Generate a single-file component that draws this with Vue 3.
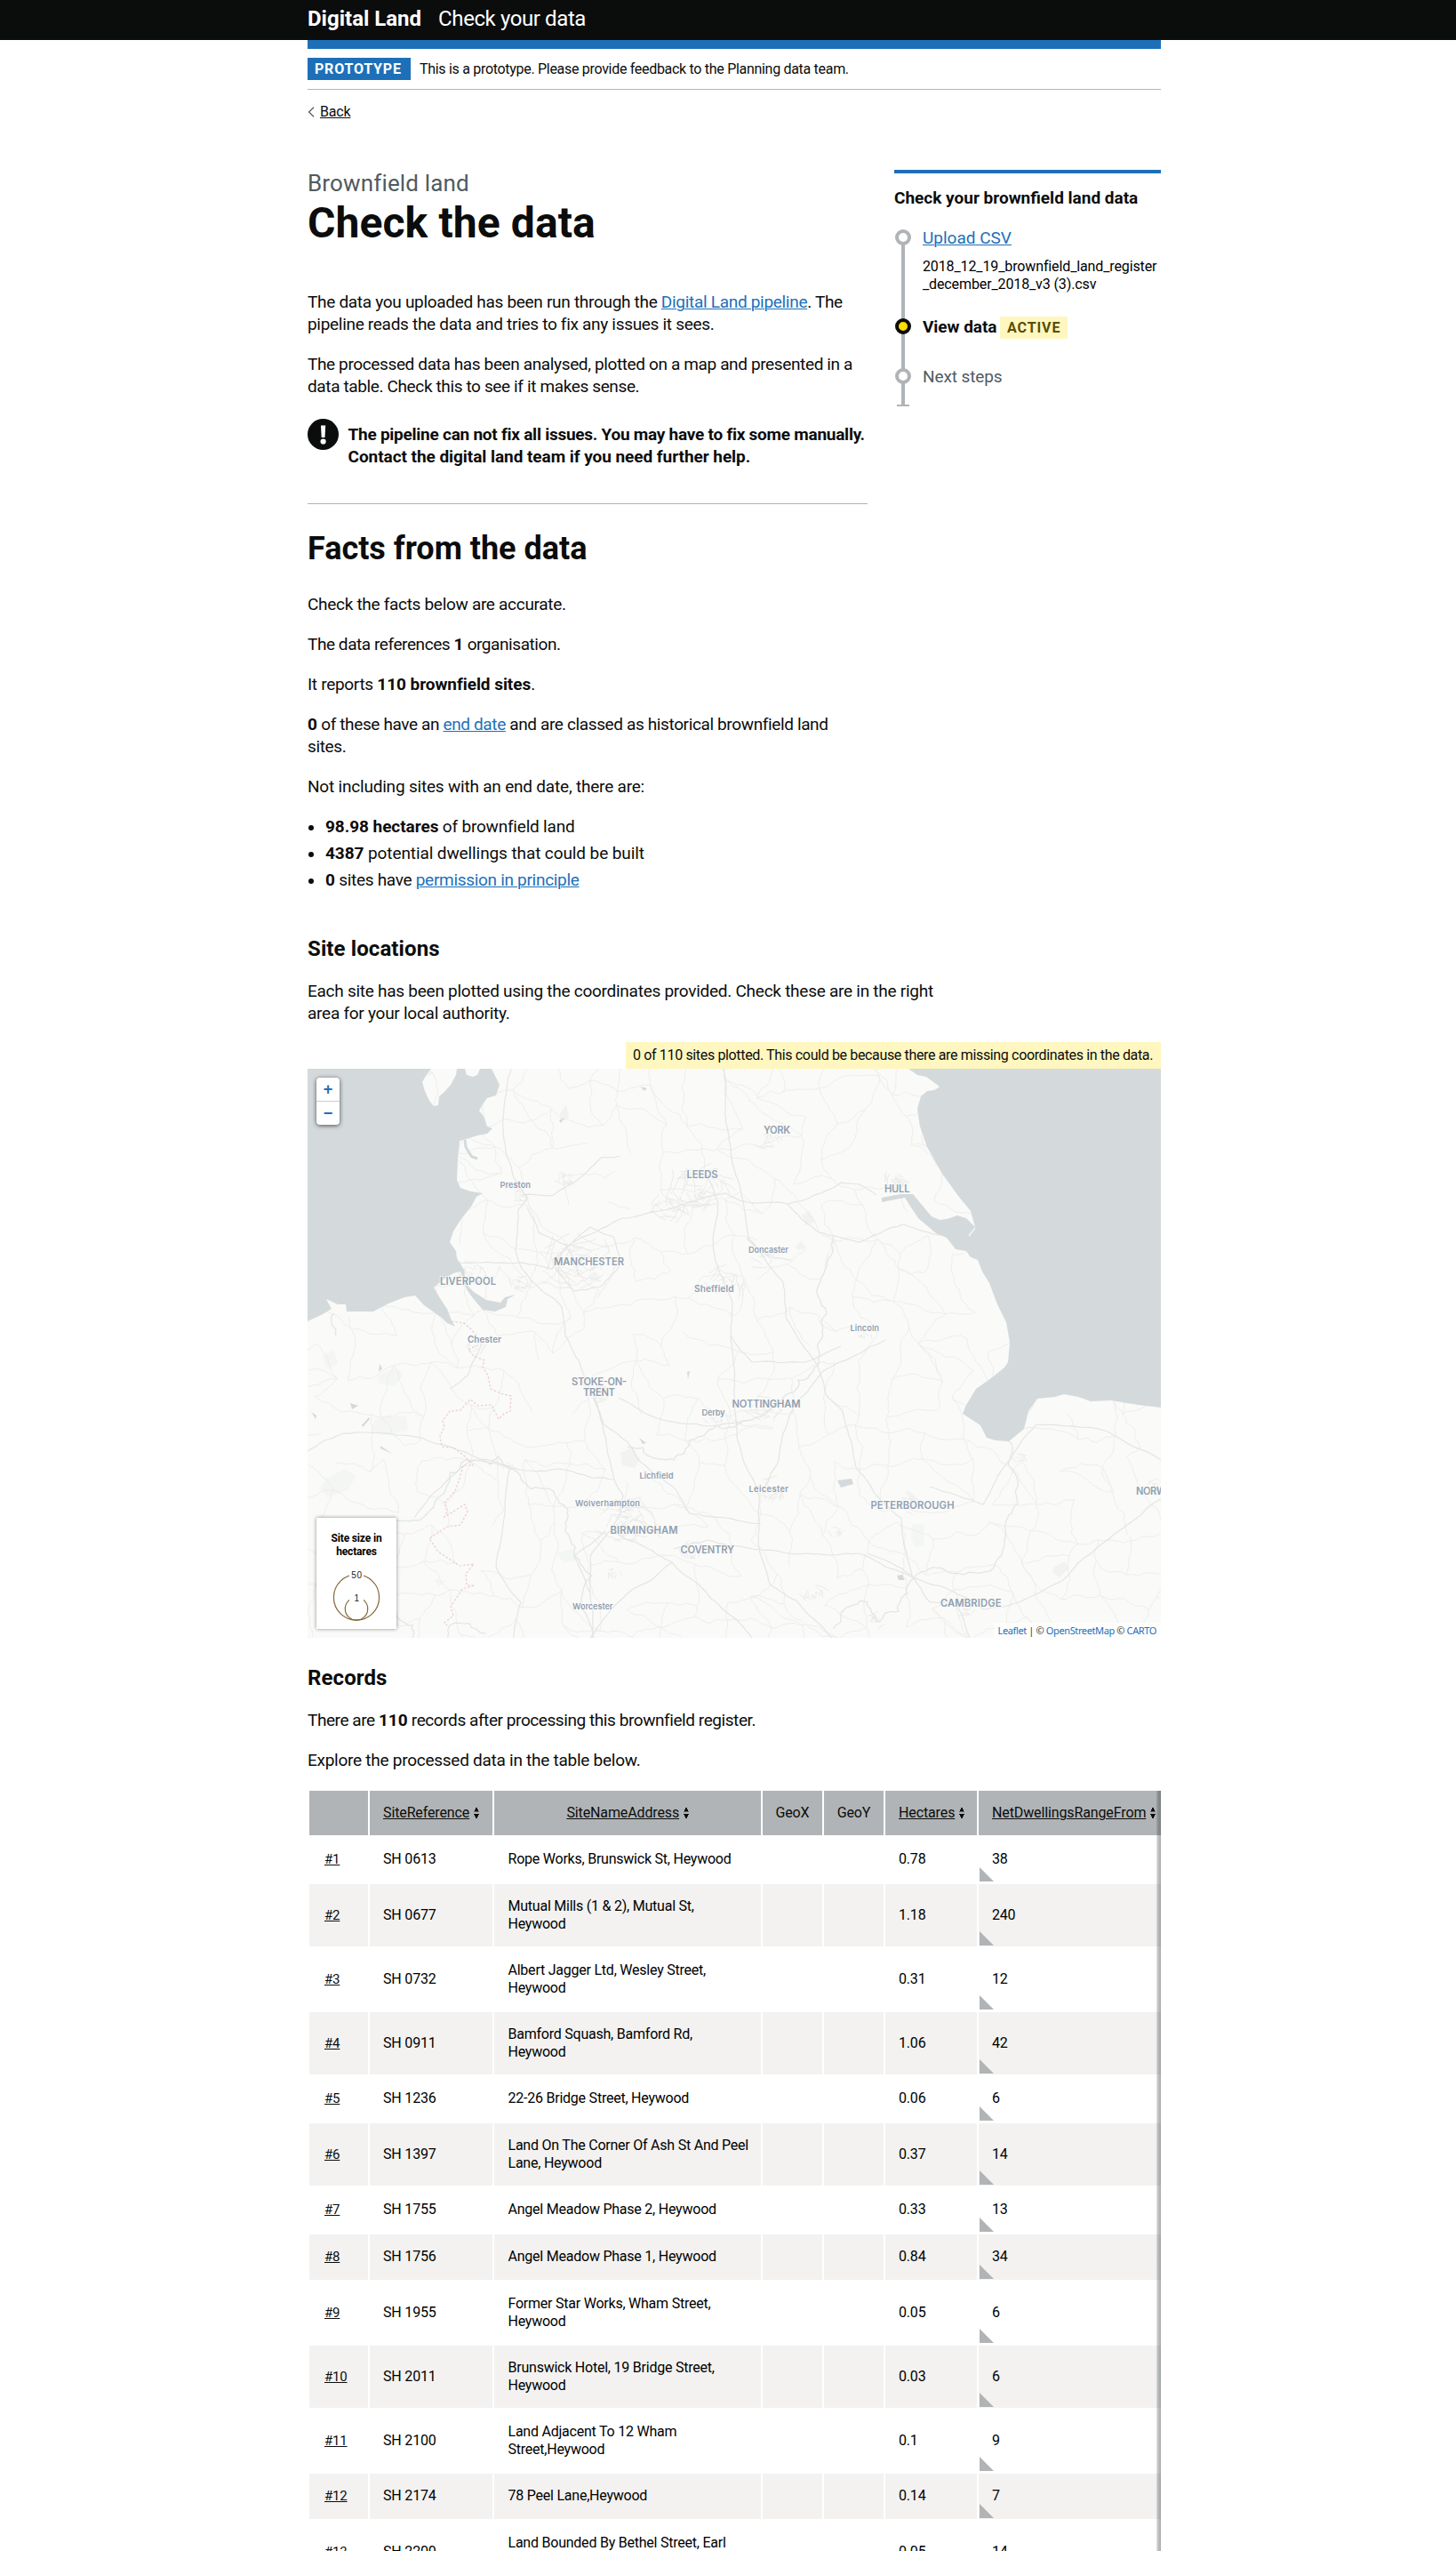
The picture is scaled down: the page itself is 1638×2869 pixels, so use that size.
<script setup>
const rows = [
  ['SH 0613', ['Rope Works, Brunswick St, Heywood'], '0.78', '38'],
  ['SH 0677', ['Mutual Mills (1 & 2), Mutual St,', 'Heywood'], '1.18', '240'],
  ['SH 0732', ['Albert Jagger Ltd, Wesley Street,', 'Heywood'], '0.31', '12'],
  ['SH 0911', ['Bamford Squash, Bamford Rd,', 'Heywood'], '1.06', '42'],
  ['SH 1236', ['22-26 Bridge Street, Heywood'], '0.06', '6'],
  ['SH 1397', ['Land On The Corner Of Ash St And Peel', 'Lane, Heywood'], '0.37', '14'],
  ['SH 1755', ['Angel Meadow Phase 2, Heywood'], '0.33', '13'],
  ['SH 1756', ['Angel Meadow Phase 1, Heywood'], '0.84', '34'],
  ['SH 1955', ['Former Star Works, Wham Street,', 'Heywood'], '0.05', '6'],
  ['SH 2011', ['Brunswick Hotel, 19 Bridge Street,', 'Heywood'], '0.03', '6'],
  ['SH 2100', ['Land Adjacent To 12 Wham', 'Street,Heywood'], '0.1', '9'],
  ['SH 2174', ['78 Peel Lane,Heywood'], '0.14', '7'],
  ['SH 2200', ['Land Bounded By Bethel Street, Earl', 'Street, Heywood'], '0.05', '14'],
]

// left edge, baseline, rendered width, size
const places = [
  ['YORK', 513, 73, 30, 11.2], ['LEEDS', 426.5, 123, 35, 11.2], ['HULL', 649, 139, 28.5, 11.2],
  ['MANCHESTER', 277, 221, 79, 11.2], ['LIVERPOOL', 149, 243, 63, 11.2],
  ['STOKE-ON-', 297, 356, 62, 11.2], ['TRENT', 310, 367.5, 36, 11.2],
  ['NOTTINGHAM', 477.5, 381, 77, 11.2], ['BIRMINGHAM', 340.5, 523, 76, 11.2],
  ['COVENTRY', 419.5, 544.5, 60.5, 11.2], ['PETERBOROUGH', 633.5, 495, 94, 11.2],
  ['CAMBRIDGE', 712, 604.5, 68.5, 11.2], ['NORWICH', 932, 478.5, 52, 11.2],
  ['Preston', 216.5, 134, 34.5, 9.3], ['Sheffield', 435, 250.5, 44.5, 10.2],
  ['Doncaster', 496, 206.5, 45, 9.3], ['Lincoln', 610.5, 295, 32.5, 9.3],
  ['Chester', 180, 307.5, 38, 10], ['Derby', 443.5, 389.5, 26, 9.3],
  ['Lichfield', 373.5, 461, 38, 9.3], ['Wolverhampton', 301, 491.5, 73, 9.3],
  ['Worcester', 298, 608, 45.5, 9.3], ['Leicester', 496.5, 475.5, 44.5, 9.3],
]

let seed = 20181219
const rnd = () => {
  seed = (seed * 1664525 + 1013904223) % 4294967296
  return seed / 4294967296
}

// Subdivide a list of waypoints into an organic, slightly meandering line
function meander(flat, amount = 0.09) {
  let pts = []
  for (let i = 0; i < flat.length; i += 2) pts.push([flat[i], flat[i + 1]])
  for (let pass = 0; pass < 3; pass++) {
    const next = [pts[0]]
    for (let i = 1; i < pts.length; i++) {
      const [ax, ay] = pts[i - 1]
      const [bx, by] = pts[i]
      const k = (rnd() - 0.5) * 2 * amount
      next.push([(ax + bx) / 2 - (by - ay) * k, (ay + by) / 2 + (bx - ax) * k], [bx, by])
    }
    pts = next
  }
  return 'M' + pts.map(p => p[0].toFixed(1) + ' ' + p[1].toFixed(1)).join('L')
}

const motorways = [
  [229, 0, 222, 35, 220, 68, 225, 100, 232, 122, 248, 145, 237, 158, 236, 180, 234, 205, 242, 226, 262, 248, 286, 268, 290, 300, 306, 330, 322, 368, 330, 395, 336, 420, 342, 450, 346, 465, 355, 480, 352, 500, 340, 520, 318, 548, 318, 590, 320, 640],
  [468, 0, 470, 40, 474, 80, 482, 120, 490, 150, 496, 190, 515, 215, 535, 240, 538, 280, 574, 334, 584, 368, 602, 385, 612, 420, 618, 450, 640, 480, 668, 505, 674, 545, 680, 570, 700, 600],
  [240, 142, 275, 143, 310, 120, 330, 100, 352, 98],
  [150, 215, 190, 218, 240, 218, 275, 225, 292, 200, 330, 180, 355, 168, 395, 160, 430, 150, 470, 140, 494, 150, 540, 152, 565, 145, 600, 128, 620, 130, 640, 142],
  [247, 156, 260, 184, 290, 198, 300, 214, 305, 232], [450, 120, 462, 150, 456, 190, 462, 225, 478, 262, 476, 300, 480, 350, 482, 395, 490, 440, 508, 480, 508, 540, 520, 580, 550, 598, 590, 640],
  [345, 462, 320, 460, 285, 450, 250, 452, 228, 448], [321, 370, 333, 400, 360, 420, 372, 440, 400, 462, 416, 476, 430, 500, 470, 505, 510, 512],
  [412, 540, 450, 530, 500, 540, 560, 545, 620, 545, 650, 560, 680, 572, 720, 585, 760, 608, 800, 600, 850, 575, 900, 530, 960, 484],
  [476, 300, 500, 330, 560, 330, 600, 312], [340, 520, 380, 538, 410, 555, 440, 580, 470, 610, 500, 640],
  [318, 590, 300, 548, 335, 520], [650, 305, 580, 340, 550, 375, 535, 410, 530, 440, 515, 470],
  [680, 570, 630, 545], [350, 370, 400, 395, 450, 402, 500, 395], [700, 600, 730, 600, 745, 640],
  [540, 152, 575, 184, 620, 195, 670, 175, 715, 187], [494, 190, 520, 212, 545, 215], [280, 225, 300, 250, 330, 245, 352, 220, 345, 190, 318, 178, 292, 200, 275, 215],
  [0, 430, 40, 410, 100, 412, 160, 425, 228, 448], [120, 505, 160, 460, 185, 440, 228, 448], [700, 470, 760, 490, 790, 440, 820, 400, 900, 408, 960, 440],
  [228, 448, 222, 500, 212, 560, 240, 600, 232, 640], [160, 360, 180, 345, 195, 310], [318, 640, 360, 590, 410, 555],
]

// Country roads: a loose lattice of settlements joined to their neighbours
const gx = 38
const gy = 36
const cols = Math.ceil(960 / gx) + 2
const lines = Math.ceil(640 / gy) + 2
const nodes = []
for (let j = 0; j < lines; j++)
  for (let i = 0; i < cols; i++)
    nodes.push([(i - 0.5) * gx + (rnd() - 0.5) * 32, (j - 0.5) * gy + (rnd() - 0.5) * 30])
const lanes = []
for (let j = 0; j < lines - 1; j++)
  for (let i = 0; i < cols - 1; i++) {
    const a = nodes[j * cols + i]
    if (rnd() < 0.6) lanes.push([...a, ...nodes[j * cols + i + 1]])
    if (rnd() < 0.6) lanes.push([...a, ...nodes[(j + 1) * cols + i]])
    if (rnd() < 0.25) lanes.push([...a, ...nodes[(j + 1) * cols + i + 1]])
  }

const towns = [
  [305, 215, 42], [440, 140, 40], [360, 510, 36], [515, 382, 20], [520, 475, 18], [186, 228, 18], [470, 240, 22],
  [330, 365, 16], [520, 80, 14], [660, 125, 14], [515, 210, 16], [435, 545, 16], [675, 492, 14], [744, 605, 14],
  [228, 448, 9], [240, 142, 12], [190, 312, 12], [460, 395, 14], [800, 438, 8], [345, 570, 10], [625, 300, 10],
  [570, 590, 14], [595, 520, 10], [954, 470, 12], [240, 240, 14], [640, 620, 12], [290, 122, 12], [405, 155, 22],
]
const streets = []
for (const [x, y, r] of towns) {
  const n = Math.round(r * 1.1)
  for (let k = 0; k < n; k++) {
    const a = rnd() * 6.283
    const d = rnd() * r
    const b = a + 0.5 + rnd() * 0.8
    const e = Math.max(3, d + (rnd() - 0.5) * r * 0.8)
    streets.push([x + Math.cos(a) * d, y + Math.sin(a) * d * 0.8, x + Math.cos(b) * e, y + Math.sin(b) * e * 0.8])
  }
}
const motorwayPath = motorways.map(m => meander(m, 0.05)).join('')
const lanePath = lanes.map(m => meander(m, 0.14)).join('')
const streetPath = streets.map(m => meander(m, 0.1)).join('')
const rivers = [
  [100, 508, 120, 508, 150, 480, 160, 455, 178, 440, 205, 445, 215, 436, 228, 450, 240, 462, 250, 472, 275, 474, 288, 490, 290, 510, 300, 548, 320, 570, 322, 640],
  [474, 403, 500, 395, 535, 370, 552, 350, 574, 334, 580, 300, 584, 275, 578, 235, 590, 200, 592, 190],
  [592, 630, 600, 612, 630, 600, 640, 622, 665, 610, 675, 590, 688, 567, 720, 566, 768, 565, 785, 525, 792, 500, 792, 450, 789, 419],
  [360, 425, 390, 438, 412, 440, 430, 418, 450, 408, 474, 403], [30, 275, 32, 300], [158, 640, 160, 626, 200, 635], [100, 612, 118, 625, 118, 640],
].map(r => meander(r, 0.2)).join('')
</script>

<template>
  <div class="page">
    <header class="top">
      <div class="wrap top-inner"><strong>Digital Land</strong><span>Check your data</span></div>
    </header>

    <div class="wrap">
      <div class="bar"></div>
      <div class="phase">
        <strong class="tag">PROTOTYPE</strong>
        <span>This is a prototype. Please provide feedback to the Planning data team.</span>
      </div>
      <div class="back">
        <svg width="8" height="12" viewBox="0 0 8 12"><path d="M7 .7 1.6 6 7 11.300" fill="none" stroke="#505a5f" stroke-width="1.200" /></svg>
        <a href="#">Back</a>
      </div>

      <div class="columns">
        <main class="intro">
          <span class="caption">Brownfield land</span>
          <h1>Check the data</h1>
          <p>The data you uploaded has been run through the <a href="#">Digital Land pipeline</a>. The<br>pipeline reads the data and tries to fix any issues it sees.</p>
          <p class="tight">The processed data has been analysed, plotted on a map and presented in a<br>data table. Check this to see if it makes sense.</p>
          <div class="warning">
            <svg width="35" height="35" viewBox="0 0 35 35">
              <circle cx="17.500" cy="17.500" r="17.500" fill="#0b0c0c" />
              <path d="M15 7.500h5.200l-.7 13.500h-3.800z" fill="#fff" />
              <circle cx="17.600" cy="25.500" r="3.100" fill="#fff" />
            </svg>
            <strong>The pipeline can not fix all issues. You may have to fix some manually.<br><span class="contact">Contact the digital land team if you need further help.</span></strong>
          </div>
          <hr>
          <h2>Facts from the data</h2>
          <p>Check the facts below are accurate.</p>
          <p class="tighter">The data references <b>1</b> organisation.</p>
          <p>It reports <b>110 brownfield sites</b>.</p>
          <p class="tight"><b>0</b> of these have an <a href="#">end date</a> and are classed as historical brownfield land<br>sites.</p>
          <p class="loose">Not including sites with an end date, there are:</p>
          <ul>
            <li class="loose"><b>98.98 hectares</b> of brownfield land</li>
            <li class="looser"><b>4387</b> potential dwellings that could be built</li>
            <li><b>0</b> sites have <a href="#">permission in principle</a></li>
          </ul>
        </main>

        <aside class="side">
          <h4>Check your brownfield land data</h4>
          <ol>
            <li class="step upload">
              <a href="#">Upload CSV</a>
              <small>2018_12_19_brownfield_land_register<br>_december_2018_v3 (3).csv</small>
            </li>
            <li class="step active"><strong>View data</strong><span class="tag yellow">ACTIVE</span></li>
            <li class="step next">Next steps</li>
          </ol>
        </aside>
      </div>

      <h3>Site locations</h3>
      <p class="easy">Each site has been plotted using the coordinates provided. Check these are in the right<br>area for your local authority.</p>

      <div class="notice"><span>0 of 110 sites plotted. This could be because there are missing coordinates in the data.</span></div>
      <div class="map">
        <svg class="tiles" width="960" height="640" viewBox="0 0 960 640">
          <rect width="960" height="640" fill="#fafaf8" />
          <g fill="#f4f6f4">
            <path d="M76 395l15-6 20 2 2 16-24 5-18-6zM22 460l20-10 12 8-8 16-24 8-8-10zM16 322l14-6 4 16-12 6zM78 345l20-8 10 6-10 14-18-4zM280 545l20-6 4 14-16 2zM680 512l14 1-1 24-10 1-4-12zM142 574l14 2-8 6z" />
          </g>
          <g fill="#f2f2f0">
            <path d="M352 432l12-6 10 12-6 11-14-3zM284 50l7-10 3 14-9 6zM556 164l8-4 8 12-12 4zM549 200l6-6 7 8-10 2zM672 474l6 2 12 11-10 1zM840 560l12-6 4 8-10 10-8-6zM316 232l8-4 6 8-12 3zM656 125l8-4 14 6-10 8z" />
          </g>
          <path :d="lanePath" fill="none" stroke="#eeeeec" stroke-width="1" />
          <path :d="streetPath" fill="none" stroke="#eaeae9" stroke-width="1" />
          <path :d="motorwayPath" fill="none" stroke="#e5e5e4" stroke-width="1.200" />
          <path :d="rivers" fill="none" stroke="#e1e7e9" stroke-width="1.300" />
          <path d="M162 284 176 286 184 293 191 301 191 311 181 316 187 323 199 328 197 335 203 345 206 360 217 365 229 368 228 385 221 388 215 394 207 378 192 379 183 372 172 384 160 385 152 396 154 403 149 413 151 425 164 426 176 435 186 446 175 446 171 461 166 475 154 488 157 498 154 504 177 490 180 498 172 513 157 515 137 528 147 543 171 559 187 557 178 568 179 581 188 581 174 585 161 605 164 615 154 623 157 626" fill="none" stroke="#ecccd0" stroke-width="1.200" stroke-dasharray="2.500 2" />
          <g fill="#d4dadc">
            <path d="M0 0H139L133 8 129 15 132 25 137 36 142 42 147 41 148 31 154 26 161 18 167 7 168 0H177L179 7 186 9 191 7 194 0H207L211 8 216 18 212 30 202 33 197 40 193 47 199 55 202 65 208 67 202 73 191 75 179 79 171 81 169 101 168 125 172 134 184 138 197 140 190 144 184 155 172 170 164 183 160 195 167 205 168 213 176 226 178 240 181 245 187 251 201 260 217 263 222 257 234 254 225 259 223 268 211 273 197 271 186 258 179 248 175 236 172 228 164 230 154 236 142 246 149 258 157 270 162 283 166 290 157 286 151 280 131 266 121 255 109 257 91 264 74 273 44 273 43 265 34 265 21 259 27 270 17 276 0 284Z" />
            <path d="M676 0 686 7 696 9 711 20 706 24 697 25 690 31 686 45 689 65 697 88 714 118 732 143 746 160 751 178 741 168 731 165 719 169 711 170 702 166 691 153 681 141 667 141 646 145 646 150 661 147 672 145 679 156 687 168 707 185 719 190 729 203 741 205 746 212 754 215 759 228 767 241 776 265 786 285 790 308 788 330 784 336 769 348 752 360 741 378 737 388 757 401 764 415 774 418 789 419 806 405 811 385 821 371 841 369 851 366 867 369 881 374 904 373 934 378 960 381V0Z" />
            <path d="M596 463 612 461 614 467 600 471zM663 570 669 569 672 575 665 575zM374 20l8 2-3 3zM283 58l6-3-4 6zM61 401l8-9 1 2-8 9zM82 424l13 9-13-6zM48 376l9 3-7 4zM4 386l6 4-1 4zM81 332l3 5-4 4zM373 415l8 6-4 1zM427 341l3-1-2 9z" />
          </g>
          <path d="M177 80l1 8 4 7 3 4 6 2" fill="none" stroke="#d4dadc" stroke-width="3" />
          <path d="M744 188 751 179" stroke="#f4f5f4" stroke-width="1.500" />
          <g class="labels">
            <text v-for="p in places" :key="p[0]" :x="p[1]" :y="p[2]" :font-size="p[4]" :textLength="p[3]">{{ p[0] }}</text>
          </g>
        </svg>
        <div class="zoom"><span>+</span><span>−</span></div>
        <div class="legend">
          <b>Site size in<br>hectares</b>
          <svg width="60" height="58" viewBox="0 0 60 58">
            <g fill="none" stroke="#85683b" stroke-width="1.200">
              <circle cx="30" cy="29.500" r="25.600" /><circle cx="30" cy="42.400" r="12.700" />
            </g>
            <path d="M22 0h16v9H22zM22 27h16v8H22z" fill="#fff" />
            <g font-family="Liberation Sans, Arial, sans-serif" font-size="10" text-anchor="middle" fill="#222">
              <text x="30" y="7.500" textLength="11.500">50</text><text x="30" y="33.500">1</text>
            </g>
          </svg>
        </div>
        <div class="credit"><a>Leaflet</a> | © <a>OpenStreetMap</a> © <a>CARTO</a></div>
      </div>

      <h3 class="records">Records</h3>
      <p class="tighter">There are <b>110</b> records after processing this brownfield register.</p>
      <p class="easy">Explore the processed data in the table below.</p>

      <div class="scroller">
        <table>
          <colgroup><col class="c1"><col class="c2"><col class="c3"><col class="c4"><col class="c4"><col class="c6"><col class="c7"></colgroup>
          <thead>
            <tr>
              <th></th>
              <th class="l"><a href="#">SiteReference</a><i></i></th>
              <th><a href="#">SiteNameAddress</a><i></i></th>
              <th>GeoX</th>
              <th>GeoY</th>
              <th class="l"><a href="#">Hectares</a><i></i></th>
              <th class="l"><a href="#">NetDwellingsRangeFrom</a><i></i></th>
            </tr>
          </thead>
          <tbody>
            <tr v-for="(r, n) in rows" :key="r[0]" :class="{ tall: r[1].length > 1 }">
              <td class="num"><a href="#">#{{ n + 1 }}</a></td>
              <td>{{ r[0] }}</td>
              <td class="addr"><template v-for="(t, k) in r[1]" :key="k"><br v-if="k">{{ t }}</template></td>
              <td></td>
              <td></td>
              <td>{{ r[2] }}</td>
              <td class="corner">{{ r[3] }}</td>
            </tr>
          </tbody>
        </table>
        <div class="edge"></div>
      </div>
    </div>
  </div>
</template>

<style>
body { margin: 0; background: #fff; }
</style>

<style scoped>
.page { height: 2869px; overflow: hidden; font: 19px/25px Roboto, "Liberation Sans", sans-serif; letter-spacing: -.33px; color: #0b0c0c; }
.wrap { width: 960px; margin: 0 332px 0 346px; }
a { color: #1d70b8; text-decoration: underline; text-decoration-thickness: 1px; text-underline-offset: 1px; text-decoration-skip-ink: auto; }
b, strong { font-weight: 700; letter-spacing: -.05px; }
h1, h2, h3, h4, p, ul, ol { margin: 0; padding: 0; font-weight: 700; letter-spacing: 0; }
p, ul, ol { font-weight: 400; letter-spacing: -.3px; }
p { margin-bottom: 20px; }
.tight { letter-spacing: -.37px; }
.tighter { letter-spacing: -.43px; }
.easy { letter-spacing: -.26px; }
.loose { letter-spacing: -.2px; }
.looser { letter-spacing: -.1px; }

.top { background: #0b0c0c; height: 45px; }
.top-inner { display: flex; gap: 19px; position: relative; top: 6px; color: #fff; font-size: 24px; line-height: 30px; letter-spacing: -.4px; }
.top-inner strong { letter-spacing: 0; }
.bar { height: 10px; background: #1d70b8; }
.phase { display: flex; align-items: center; gap: 10px; height: 45px; border-bottom: 1px solid #b1b4b6; font-size: 16px; line-height: 20px; letter-spacing: -.3px; }
.tag { background: #1d70b8; color: #fff; height: 25px; line-height: 25px; width: 100px; padding: 0 8px; font-size: 16px; font-weight: 700; letter-spacing: .8px; }
.back { display: flex; align-items: center; gap: 6px; height: 20px; margin-top: 15px; font-size: 16px; line-height: 20px; letter-spacing: -.2px; }
.back a { color: #0b0c0c; }

.columns { display: flex; justify-content: space-between; height: 861px; margin-top: 55px; }
.intro { width: 630px; white-space: nowrap; }
.caption { display: block; font-size: 26px; line-height: 30px; letter-spacing: .15px; color: #505a5f; margin-bottom: 5px; }
h1 { font-size: 48px; line-height: 50px; letter-spacing: .1px; margin-bottom: 51px; }
h2 { font-size: 36px; line-height: 40px; margin-bottom: 30px; }
h3 { font-size: 24px; line-height: 30px; letter-spacing: .1px; margin-bottom: 20px; }
.warning { display: flex; gap: 10.500px; margin-top: 24px; }
.warning strong { padding-top: 5px; letter-spacing: -.25px; }
.warning .contact { letter-spacing: -.05px; }
hr { margin: 40px 0 30px; border: 0; border-top: 1px solid #b1b4b6; }
ul { list-style: none; }
li { position: relative; }
ul li { padding-left: 20px; margin-bottom: 5px; }
ul li::before { content: ""; position: absolute; left: 1px; top: 10.500px; width: 6px; height: 6px; border-radius: 50%; background: #0b0c0c; }

.side { width: 300px; border-top: 4px solid #1d70b8; height: 300px; }
h4 { margin-top: 15px; line-height: 25px; }
ol { list-style: none; position: relative; margin-top: 20px; height: 202px; }
ol::before { content: ""; position: absolute; left: 8px; top: 12px; width: 4px; bottom: 2px; background: #b1b4b6; }
ol::after { content: ""; position: absolute; left: 3px; bottom: 0; width: 14px; height: 2px; background: #b1b4b6; }
.step { padding-left: 32px; letter-spacing: 0; }
.step::before { content: ""; position: absolute; z-index: 1; left: 1px; top: 3px; width: 10px; height: 10px; border: 4px solid #b1b4b6; border-radius: 50%; background: #fff; }
.upload { height: 100px; }
.upload small { display: block; margin-top: 10px; font-size: 16px; line-height: 20px; letter-spacing: -.12px; white-space: nowrap; color: #000; }
.active { display: flex; height: 56px; }
.active strong { width: 87px; }
.active::before { background: #ffdd00; border-color: #0b0c0c; }
.yellow { width: 60px; margin-top: 1px; background: #fff7bf; color: #594d00; letter-spacing: .9px; }
.next { color: #505a5f; letter-spacing: -.1px; }

.notice { display: flex; justify-content: flex-end; font-size: 16px; line-height: 30px; letter-spacing: -.35px; white-space: nowrap; }
.notice span { background: #fff7bf; padding: 0 8px; width: 586px; }
.map { position: relative; height: 640px; overflow: hidden; }
.tiles { display: block; }
.labels { font-family: Inter, Lato, sans-serif; font-weight: 600; fill: #909fb0; stroke: #fafaf8; stroke-width: 2px; paint-order: stroke; stroke-opacity: .7; letter-spacing: 0; }
.zoom { position: absolute; left: 10px; top: 10px; width: 26px; border-radius: 4px; background: #fff; box-shadow: 0 1px 5px rgba(0, 0, 0, .65); }
.zoom span { display: block; height: 26px; font: 700 18px/27px "Liberation Sans", sans-serif; text-align: center; color: #1d70b8; letter-spacing: 0; }
.zoom span + span { border-top: 1px solid #ccc; }
.legend { position: absolute; left: 10px; top: 505px; width: 90px; height: 125px; background: #fff; box-shadow: 0 0 4px rgba(0, 0, 0, .45); text-align: center; }
.legend b { display: block; padding-top: 16px; font-size: 12px; line-height: 15px; letter-spacing: -.15px; color: #000; }
.legend svg { display: block; margin: 14px auto 0; }
.credit { position: absolute; right: 0; bottom: 0; height: 17px; padding: 0 5px; background: rgba(255, 255, 255, .7); font: 11px/17px "Noto Sans", sans-serif; letter-spacing: -.38px; color: #333; }
.credit a { text-decoration: none; }
.records { margin-top: 30px; }

.scroller { position: relative; overflow: hidden; }
table { table-layout: fixed; width: 978px; margin-right: -18px; border-spacing: 2px; font-size: 16px; line-height: 20px; letter-spacing: -.18px; color: #000; }
.c1 { width: 66px; } .c2 { width: 138px; } .c3 { width: 300px; } .c4 { width: 67px; } .c6 { width: 103px; } .c7 { width: 221px; }
th { height: 50px; padding: 0; background: #b1b4b6; font-weight: 400; color: #0b0c0c; white-space: nowrap; }
.l { text-align: left; padding-left: 15px; }
th a, .num a { color: #0b0c0c; }
th a { letter-spacing: -.12px; }
th i { display: inline-block; width: 6px; height: 14px; margin-left: 4.500px; vertical-align: -1.500px; background: conic-gradient(from 152deg at 50% 0, #0b0c0c 56deg, transparent 0) top / 6px 5.500px no-repeat, conic-gradient(from -28deg at 50% 100%, #0b0c0c 56deg, transparent 0) bottom / 6px 5.500px no-repeat; }
td { height: 50px; padding: 0 0 1px 15px; }
.tall td { height: 69px; }
tbody tr:nth-child(even) td { background: #f3f2f1; }
td.num { padding-left: 17px; font-size: 15px; }
.addr { padding-left: 15.500px; white-space: nowrap; letter-spacing: -.23px; }
.corner { position: relative; }
.corner::after { content: ""; position: absolute; left: 1px; bottom: 1px; border-left: 16px solid #b1b4b6; border-top: 16px solid transparent; }
.edge { position: absolute; right: 0; top: 2px; bottom: 0; width: 5px; background: linear-gradient(90deg, rgba(11, 12, 12, .1), rgba(40, 48, 52, .28) 35%, rgba(40, 48, 52, .4)); }
</style>
